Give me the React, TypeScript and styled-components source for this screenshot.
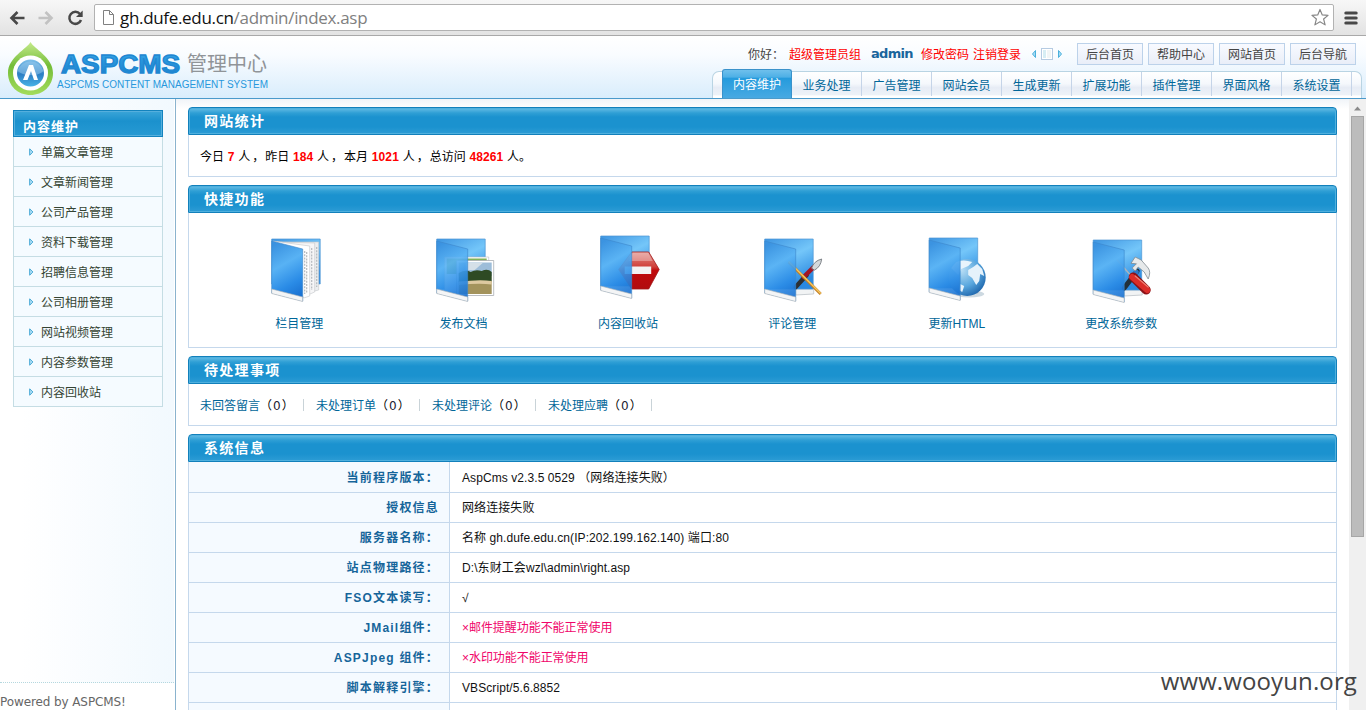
import React from "react";
import styled, { createGlobalStyle } from "styled-components";

const cjk = `"Liberation Sans", "Noto Sans CJK SC", sans-serif`;

const GlobalStyle = createGlobalStyle`
  *, *::before, *::after { box-sizing: border-box; }
  html, body { margin: 0; padding: 0; overflow: hidden; }
  body { font: 12px/18px ${cjk}; color: #000; background: #fff; }
  svg { display: block; }
`;

const Page = styled.div`
  position: relative;
  display: flex;
  flex-direction: column;
  width: 1366px;
  height: 710px;
  overflow: hidden;
`;

/* ---------- browser toolbar ---------- */
const Toolbar = styled.div`
  flex: none;
  height: 36px;
  display: flex;
  align-items: center;
  padding: 0 8px 0 9px;
  background: linear-gradient(#f7f7f7, #e3e3e3);
  border-bottom: 1px solid #a9a9a9;
`;
const NavIcons = styled.div`
  display: flex;
  width: 85px;
  gap: 13px;
`;
const AddressBar = styled.div`
  width: 1240px;
  height: 27px;
  display: flex;
  align-items: center;
  padding: 0 4px 0 7px;
  background: #fff;
  border: 1px solid #b2b2b2;
  border-radius: 2px;
`;
const Url = styled.div`
  flex: 1;
  margin-left: 5px;
  font: 17px/24px "Open Sans", sans-serif;
  letter-spacing: -0.32px;
  color: #808080;
  white-space: nowrap;
`;
const Host = styled.span`
  color: #111;
`;
const MenuButton = styled.div`
  margin-left: 10px;
`;

/* ---------- header ---------- */
const Header = styled.header`
  flex: none;
  height: 63px;
  display: flex;
  justify-content: space-between;
  padding-right: 4px;
  background: linear-gradient(#fff 0%, #f9fcff 30%, #d9edfc 100%);
  border-bottom: 1px solid #4a9acb;
`;
const HeaderRight = styled.div`
  width: 650px;
  display: flex;
  flex-direction: column;
  justify-content: space-between;
`;
const TopLine = styled.div`
  display: flex;
  align-items: center;
  justify-content: flex-end;
  height: 22px;
  margin-top: 7px;
  padding-right: 6px;
  white-space: nowrap;
`;
const Hello = styled.span`
  color: #444;
  width: 41px;
  padding-top: 1px;
`;
const RedLink = styled.a<{ $w: number }>`
  color: #f00;
  width: ${(p) => p.$w}px;
  padding-top: 1px;
`;
const UserName = styled.b`
  width: 50px;
  font: bold 13px/18px "DejaVu Sans", sans-serif;
  letter-spacing: -0.7px;
  color: #1a659c;
`;
const Switcher = styled.div`
  width: 42px;
  padding-left: 1px;
`;
const TopButton = styled.a`
  width: 66px;
  height: 22px;
  margin-left: 5px;
  border: 1px solid #bcd2ea;
  background: linear-gradient(#f8faff, #e9eef8);
  color: #444;
  text-align: center;
  line-height: 22px;
`;
const Tabs = styled.nav`
  display: flex;
  align-items: flex-end;
  height: 29px;
`;
const TabStrip = styled.div`
  display: flex;
  align-items: flex-end;
  flex: 1;
  height: 27px;
  padding: 0 0 0 9px;
  border: 1px solid #b9d4e3;
  border-bottom: 0;
  border-radius: 7px 7px 0 0;
  background: linear-gradient(#fff 0%, #f5f8fc 45%, #e7ecf5 60%, #edf2f8 88%, #fff 92%);
`;
const Tab = styled.a<{ $active?: boolean }>`
  width: 70px;
  height: ${(p) => (p.$active ? 29 : 24)}px;
  line-height: ${(p) => (p.$active ? 30 : 28)}px;
  margin-bottom: ${(p) => (p.$active ? 0 : 2)}px;
  text-align: center;
  color: ${(p) => (p.$active ? "#fff" : "#069")};
  border: solid ${(p) => (p.$active ? "#3a92cb" : "#c5d4e8")};
  border-width: ${(p) => (p.$active ? "1px 1px 0" : "0 1px 0 0")};
  border-radius: ${(p) => (p.$active ? "3px 3px 0 0" : 0)};
  background: ${(p) =>
    p.$active ? "linear-gradient(#6fc0ec 0%, #4eb0e6 25%, #259bdd 30%, #48a9e2 100%)" : "none"};
`;

/* ---------- body ---------- */
const Body = styled.div`
  flex: 1;
  min-height: 0;
  display: flex;
`;
const Sidebar = styled.aside`
  width: 176px;
  display: flex;
  flex-direction: column;
  justify-content: space-between;
  border-right: 1px solid #8ab3ce;
`;
const SideMain = styled.div`
  height: 584px;
  padding: 11px 0 0 13px;
  background: linear-gradient(90deg, #fff 12%, #f2f9fe 100%);
  border-bottom: 1px dotted #b5d8df;
  margin-right: 1px;
`;
const Menu = styled.ul`
  list-style: none;
  width: 150px;
  margin: 0;
  padding: 0;
`;
const MenuTitle = styled.li`
  height: 27px;
  padding-left: 9px;
  border: 1px solid #1383be;
  box-shadow: inset 0 0 0 1px #55afdd;
  background: linear-gradient(#3ba5d8, #1b91cd 40%, #279ad3);
  color: #fff;
  font-weight: bold;
  font-size: 13px;
  line-height: 31px;
  letter-spacing: 1px;
`;
const MenuItem = styled.li`
  display: flex;
  align-items: center;
  gap: 7px;
  height: 30px;
  padding-left: 15px;
  border: solid #c5dde4;
  border-width: 0 1px 1px;
  background: #f5fbff;
  color: #344433;
`;
const MenuLabel = styled.span`
  padding-top: 2px;
`;
const Powered = styled.div`
  height: 27px;
  padding-top: 10px;
  font: 12px/18px "DejaVu Sans", sans-serif;
  letter-spacing: -0.1px;
  color: #666;
  white-space: nowrap;
`;
const Content = styled.main`
  width: 1173px;
  padding: 8px 12px 0;
  display: flex;
  flex-direction: column;
  gap: 8px;
  background: linear-gradient(#f0f4f8, #fff 10px);
  overflow: hidden;
`;
const Panel = styled.section<{ $h: number }>`
  flex: none;
  height: ${(p) => p.$h}px;
  display: flex;
  flex-direction: column;
`;
const PanelTitle = styled.h2`
  flex: none;
  height: 28px;
  margin: 0;
  padding-left: 15px;
  border: 1px solid #1280bb;
  border-radius: 4px 4px 0 0;
  box-shadow: inset 0 0 0 1px #4fb0de;
  background: linear-gradient(#67bde5 0, #2f9fd5 5px, #1b92cf 9px, #1b92cf 19px, #2d9cd5 100%);
  color: #fff;
  font-size: 14px;
  line-height: 27px;
  letter-spacing: 1.3px;
`;
const PanelBody = styled.div`
  flex: 1;
  border: 1px solid #c5d8ec;
  border-top-width: 0;
  background: #fff;
`;
const Stats = styled.div`
  padding: 13px 11px 10px;
  white-space: pre;
  word-spacing: 0.4px;
`;
const Comma = styled.span`
  padding: 0 1px 0 2px;
`;
const Num = styled.b`
  color: #f00;
  letter-spacing: 0.1px;
`;
const Shortcuts = styled.div`
  display: flex;
  padding: 21px 0 0 28px;
`;
const Shortcut = styled.a`
  flex: none;
  width: 164.4px;
  display: flex;
  flex-direction: column;
  align-items: center;
  gap: 11px;
  color: #069;
`;
const Todos = styled.div`
  display: flex;
  padding-top: 15px;
`;
const Todo = styled.div`
  width: 116px;
  height: 12px;
  padding-left: 12px;
  border-right: 1px solid #c9d3d8;
  line-height: 14px;
  white-space: nowrap;
  &:first-child { width: 115px; padding-left: 11px; }
`;
const TodoLink = styled.a`
  color: #069;
`;
const Count = styled.span`
  margin: 0 1px;
  font-family: "DejaVu Sans", sans-serif;
  color: #223;
`;
const InfoTable = styled.div`
  padding-top: 1px;
  background: linear-gradient(90deg, #f5faff 260px, #c5d8ec 260px, #c5d8ec 261px, #fff 261px);
`;
const InfoRow = styled.div`
  display: flex;
  height: 30px;
  border-bottom: 1px solid #c5d8ec;
  line-height: 30px;
`;
const InfoLabel = styled.div`
  width: 261px;
  padding-right: 10px;
  border-right: 1px solid #c5d8ec;
  color: #16659a;
  font-weight: bold;
  letter-spacing: 1.2px;
  text-align: right;
`;
const InfoValue = styled.div<{ $bad?: boolean }>`
  padding-left: 12px;
  color: ${(p) => (p.$bad ? "#f0056a" : "#111")};
  letter-spacing: ${(p) => (p.$bad ? -0.05 : 0.08)}px;
  white-space: pre;
`;

/* ---------- scrollbar ---------- */
const ScrollTrack = styled.div`
  width: 17px;
  padding: 7px 2px 0;
  background: #f0f0f0;
`;
const ScrollThumb = styled.div`
  height: 421px;
  margin-top: 5px;
  width: 13px;
  background: #bcbcbc;
  border: 1px solid #a6a6a6;
`;
const Watermark = styled.div`
  position: absolute;
  right: 9px;
  top: 664px;
  font: 24px/34px "Open Sans", sans-serif;
  letter-spacing: 0.12px;
  color: #444;
`;

const Logo = () => (
  <svg width="280" height="62" viewBox="0 36 280 62">
    <defs>
      <linearGradient id="drop" x1="0" y1="0" x2="0" y2="1">
        <stop offset="0" stopColor="#c5ea8b" />
        <stop offset=".45" stopColor="#74bd38" />
        <stop offset="1" stopColor="#a3dc5c" />
      </linearGradient>
      <linearGradient id="ball" x1="0" y1="0" x2="0" y2="1">
        <stop offset="0" stopColor="#7ec0ea" />
        <stop offset=".55" stopColor="#2d7fc4" />
        <stop offset="1" stopColor="#48b2e6" />
      </linearGradient>
      <linearGradient id="word" x1="0" y1="0" x2="0" y2="1">
        <stop offset="0" stopColor="#36a7e8" />
        <stop offset="1" stopColor="#1a7fcb" />
      </linearGradient>
    </defs>
    <path d="M30.500 42 C34 49 53 57 53 73 C53 86 43 95 30.500 95 C18 95 8 86 8 73 C8 57 27 49 30.500 42Z" fill="url(#drop)" />
    <circle cx="30.500" cy="73" r="17.500" fill="#fff" />
    <circle cx="30.500" cy="73" r="13.500" fill="url(#ball)" />
    <path d="M17.500 71 Q24 76 31 75 Q38 76 43.500 71 A13.500 13.500 0 0 0 17.500 71" fill="#9bcbed" opacity=".5" />
    <path d="M23 80 L29 65 H33 L38 80 H34 L31 71 L27.500 80Z" fill="#fff" />
    <text x="61" y="72.500" textLength="119" lengthAdjust="spacingAndGlyphs" fontFamily="Liberation Sans" fontWeight="bold" fontSize="25" fill="url(#word)" stroke="#2087d2" strokeWidth="1.300">ASPCMS</text>
    <text x="187" y="71" textLength="80" fontFamily="Noto Sans CJK SC" fontWeight="400" fontSize="20" fill="#909498">管理中心</text>
    <text x="57" y="88" textLength="211" lengthAdjust="spacingAndGlyphs" fontFamily="Liberation Sans" fontSize="10" fill="#2898dc">ASPCMS CONTENT MANAGEMENT SYSTEM</text>
  </svg>
);

const BackIcon = ({ color }: { color: string }) => (
  <svg width="16" height="16" viewBox="0 0 16 16" fill="none" stroke={color} strokeWidth="2.600">
    <path d="M15.500 8H3M8.500 2L2.500 8L8.500 14" />
  </svg>
);
const ForwardIcon = () => (
  <svg width="16" height="16" viewBox="0 0 16 16" fill="none" stroke="#c2c2c2" strokeWidth="2.600">
    <path d="M.5 8H13M7.500 2L13.500 8L7.500 14" />
  </svg>
);
const ReloadIcon = () => (
  <svg width="17" height="16" viewBox="0 0 17 16">
    <path d="M13 4A6 6 0 1 0 14 10" fill="none" stroke="#484848" strokeWidth="2.500" />
    <path d="M9 7H15.700V.5Z" fill="#484848" />
  </svg>
);
const PageIcon = () => (
  <svg width="13" height="17" viewBox="0 0 13 17" fill="#fff" stroke="#808080">
    <path d="M1.500 1.500H7.500L11.500 5.500V15.500H1.500ZM7.500 1.500V5.500H11.500" />
  </svg>
);
const StarIcon = () => (
  <svg width="18" height="19" viewBox="0 0 19 19" fill="#fff" stroke="#858585" strokeWidth="1.200" strokeLinejoin="round">
    <path d="M9.500 1L11.900 6.800L18 7.200L13.300 11.100L14.900 17.300L9.500 14L4.100 17.300L5.700 11.100L1 7.200L7.100 6.800Z" />
  </svg>
);
const BarsIcon = () => (
  <svg width="14" height="14" viewBox="0 0 14 14" stroke="#484848" strokeWidth="3" strokeLinecap="round">
    <path d="M1.800 2H12.200M1.800 7H12.200M1.800 12H12.200" />
  </svg>
);
const SwitchIcon = () => (
  <svg width="32" height="14" viewBox="0 0 32 14">
    <path d="M4.500 3.500V10.500L1.500 7Z" fill="#a9dcf5" stroke="#4ab0dc" />
    <rect x="10.500" y="1.500" width="11" height="11" fill="#fff" stroke="#b5cbe2" />
    <path d="M12 3H15V11H12Z" fill="#d7eef4" />
    <path d="M16 3H20V11H16Z" fill="#f1f5f5" />
    <path d="M27.500 3.500V10.500L30.500 7Z" fill="#a9dcf5" stroke="#4ab0dc" />
  </svg>
);
const Arrow = () => (
  <svg width="5" height="8" viewBox="0 0 5 8">
    <path d="M.7 .8V7.200L3.900 4Z" fill="#b5e2f6" stroke="#43a6d3" />
  </svg>
);

const Photo = () => (
  <g>
    <path d="M12 23H56V58H12Z" fill="#fff" stroke="#b8bcc0" strokeWidth=".6" />
    <path d="M14 24.500H54V40H14Z" fill="#84b259" />
    <path d="M24 26.500H61V61.500H24Z" fill="#fff" stroke="#a9adb2" strokeWidth=".8" />
    <path d="M26 28.500H59V42H26Z" fill="#9dbdd9" />
    <path d="M33 29H50L42 36H33Z" fill="#d5e0e8" />
    <path d="M26 39Q33 35 38 38Q43 35 49 37Q55 34 59 38V48H26Z" fill="#2e4a23" />
    <path d="M26 47H59V60H26Z" fill="#a3935c" />
    <path d="M26 48Q46 45 59 47V50.500Q46 49 26 51Z" fill="#ddc9a0" />
  </g>
);
const StopSign = () => (
  <g>
    <path d="M22 38.500L35 21H52L62.500 38.500L52 58H35Z" fill="url(#stop)" stroke="#a11718" strokeWidth=".8" />
    <path d="M28 35.500H54.500V43H28Z" fill="#f3f3f3" />
    <path d="M36 21.500H51.500L56 30H32Z" fill="#fff" opacity=".3" />
  </g>
);
const Tools = ({ hammer }: { hammer?: boolean }) =>
  hammer ? (
    <g strokeLinecap="round">
      <path d="M35 53L48 36" stroke="#22303b" strokeWidth="5" />
      <path d="M43 43L47 37" stroke="#2c79ca" strokeWidth="5" />
      <path d="M42 28L46 22L52 25L59 33Q62 37 59 44L55 37L49 32L46 36L43 33L47 29Z" fill="#e6e9ea" stroke="#818b92" strokeWidth=".8" />
      <path d="M28 25L42 41" stroke="#aab4bc" strokeWidth="1.400" />
      <path d="M44 42L57 55" stroke="#8b1217" strokeWidth="9" />
      <path d="M43 42L58 55" stroke="#db2d29" strokeWidth="6" />
      <path d="M46 41L59 52" stroke="#f07f72" strokeWidth="1.300" />
    </g>
  ) : (
    <g strokeLinecap="round">
      <path d="M35 53L46 41" stroke="#2d3033" strokeWidth="4.500" />
      <path d="M43 43L53 33" stroke="#a11527" strokeWidth="4.500" />
      <path d="M51 34Q53 27 61 25Q60 33 54 36Z" fill="#d5d8da" stroke="#757b80" strokeWidth=".9" />
      <path d="M28 28L60 60" stroke="#c07c22" strokeWidth="2.800" strokeLinecap="butt" />
      <path d="M28 27.500L60 59.500" stroke="#f7c75d" strokeWidth="1.400" strokeLinecap="butt" />
    </g>
  );
const Globe = () => (
  <g>
    <ellipse cx="44" cy="61" rx="15" ry="3.500" fill="#9bb3c4" opacity=".5" />
    <circle cx="42" cy="44.500" r="18.500" fill="url(#sea)" />
    <path d="M31 29Q38 26 47 29L43 33L36 36L33 42L26 35Z" fill="#e8f4fc" />
    <path d="M43 37L48 34L52 31L57 36L59 43L55 41L54 48L51 52L47 45L43 42Z" fill="#e5f2fb" />
    <path d="M35 51L39 53L37 59L34 57Z" fill="#e5f2fb" />
  </g>
);
const Sheets = () => (
  <g stroke="#c3c6ca" strokeWidth=".6">
    <path d="M7 8L51 8V56L43 58V10Z" fill="#eceef0" />
    <path d="M6 8L47 9V58L40 61Z" fill="#f6f6f7" />
    <path d="M5 7L42 12V62L36 64Z" fill="#fff" />
    <path d="M37 17V60M39 18V59M44 14V56M49 13V53" stroke="#b4b8bd" strokeDasharray="2 1.200" strokeWidth="1.200" />
  </g>
);

type Kind = "sheets" | "photo" | "stop" | "pen" | "globe" | "tools";
const lift: Record<Kind, number> = { sheets: 0, photo: 0, stop: -3, pen: 0, globe: -1, tools: 1 };

const FolderIcon = ({ kind }: { kind: Kind }) => (
  <svg width="64" height="70" viewBox="0 0 64 70">
    <g transform={`translate(${kind === "globe" || kind === "tools" ? 0.2 : 0.7} ${lift[kind]})`}>
      {kind !== "sheets" && kind !== "stop" && kind !== "photo" && (
        <path d="M35 55H53V60L35 61Z" fill="#f1f3f4" stroke="#b5bcc2" strokeWidth=".7" />
      )}
      <path d={kind === "sheets" ? "M4 5H52.500V50H4Z" : "M4 5H52.500V55H4Z"} fill="url(#folderBack)" stroke="#4d96d4" strokeWidth=".7" />
      {kind === "sheets" && <Sheets />}
      {kind === "photo" && <Photo />}
      {kind === "stop" && <StopSign />}
      {kind === "pen" && <Tools />}
      {kind === "globe" && <Globe />}
      {kind === "tools" && <Tools hammer />}
      <path d="M4 7L35 15V67L4 59Z" fill="url(#folderFront)" fillOpacity={kind === "sheets" ? 1 : 0.9} stroke="#3c87cb" strokeWidth=".6" />
      <path d="M4 55L35 63V67.500L4 59.500Z" fill="#f4f5f6" stroke="#aab0b5" strokeWidth=".6" />
    </g>
  </svg>
);
const IconDefs = () => (
  <svg width="0" height="0">
    <defs>
      <linearGradient id="folderBack" x1="0" y1="0" x2=".5" y2="1">
        <stop offset="0" stopColor="#3d95e2" />
        <stop offset=".5" stopColor="#74c6f9" />
        <stop offset="1" stopColor="#2a89e0" />
      </linearGradient>
      <linearGradient id="folderFront" x1=".3" y1="0" x2=".6" y2="1">
        <stop offset="0" stopColor="#3a92e0" />
        <stop offset=".38" stopColor="#58b2f4" />
        <stop offset=".75" stopColor="#2a8be6" />
        <stop offset="1" stopColor="#1a72d2" />
      </linearGradient>
      <linearGradient id="stop" x1="0" y1="0" x2="0" y2="1">
        <stop offset="0" stopColor="#e08c86" />
        <stop offset=".4" stopColor="#d0403a" />
        <stop offset=".5" stopColor="#c00a0c" />
        <stop offset="1" stopColor="#b10c0e" />
      </linearGradient>
      <radialGradient id="sea" cx=".35" cy=".3" r=".75">
        <stop offset="0" stopColor="#b9def5" />
        <stop offset=".6" stopColor="#59a7de" />
        <stop offset="1" stopColor="#2068ae" />
      </radialGradient>
    </defs>
  </svg>
);

const tabs = ["内容维护", "业务处理", "广告管理", "网站会员", "生成更新", "扩展功能", "插件管理", "界面风格", "系统设置"];
const topButtons = ["后台首页", "帮助中心", "网站首页", "后台导航"];
const menu = ["单篇文章管理", "文章新闻管理", "公司产品管理", "资料下载管理", "招聘信息管理", "公司相册管理", "网站视频管理", "内容参数管理", "内容回收站"];
const shortcuts: [string, Kind][] = [
  ["栏目管理", "sheets"],
  ["发布文档", "photo"],
  ["内容回收站", "stop"],
  ["评论管理", "pen"],
  ["更新HTML", "globe"],
  ["更改系统参数", "tools"],
];
const todos = ["未回答留言", "未处理订单", "未处理评论", "未处理应聘"];
const info: { label: string; value: string; bad?: boolean }[] = [
  { label: "当前程序版本：", value: "AspCms v2.3.5 0529 （网络连接失败）" },
  { label: "授权信息", value: "网络连接失败" },
  { label: "服务器名称：", value: "名称 gh.dufe.edu.cn(IP:202.199.162.140) 端口:80" },
  { label: "站点物理路径：", value: "D:\\东财工会wzl\\admin\\right.asp" },
  { label: "FSO文本读写：", value: "√" },
  { label: "JMail组件：", value: "×邮件提醒功能不能正常使用", bad: true },
  { label: "ASPJpeg 组件：", value: "×水印功能不能正常使用", bad: true },
  { label: "脚本解释引擎：", value: "VBScript/5.6.8852" },
  { label: "", value: "" },
];

export default function App() {
  return (
    <Page>
      <GlobalStyle />
      <Toolbar>
        <NavIcons>
          <BackIcon color="#484848" />
          <ForwardIcon />
          <ReloadIcon />
        </NavIcons>
        <AddressBar>
          <PageIcon />
          <Url>
            <Host>gh.dufe.edu.cn</Host>/admin/index.asp
          </Url>
          <StarIcon />
        </AddressBar>
        <MenuButton>
          <BarsIcon />
        </MenuButton>
      </Toolbar>

      <Header>
        <Logo />
        <HeaderRight>
          <TopLine>
            <Hello>你好：</Hello>
            <RedLink $w={82}>超级管理员组</RedLink>
            <UserName>admin</UserName>
            <RedLink $w={52}>修改密码</RedLink>
            <RedLink $w={57}>注销登录</RedLink>
            <Switcher>
              <SwitchIcon />
            </Switcher>
            {topButtons.map((b, i) => (
              <TopButton key={i}>{b}</TopButton>
            ))}
          </TopLine>
          <Tabs>
            <TabStrip>
              {tabs.map((t, i) => (
                <Tab key={t} $active={i === 0}>
                  {t}
                </Tab>
              ))}
            </TabStrip>
          </Tabs>
        </HeaderRight>
      </Header>

      <Body>
        <Sidebar>
          <SideMain>
            <Menu>
              <MenuTitle>内容维护</MenuTitle>
              {menu.map((m) => (
                <MenuItem key={m}>
                  <Arrow />
                  <MenuLabel>{m}</MenuLabel>
                </MenuItem>
              ))}
            </Menu>
          </SideMain>
          <Powered>Powered by ASPCMS!</Powered>
        </Sidebar>

        <Content>
          <Panel $h={70}>
            <PanelTitle>网站统计</PanelTitle>
            <PanelBody>
              <Stats>
                今日 <Num>7</Num> 人<Comma>，</Comma>昨日 <Num>184</Num> 人<Comma>，</Comma>本月 <Num>1021</Num> 人
                <Comma>，</Comma>总访问 <Num>48261</Num> 人。
              </Stats>
            </PanelBody>
          </Panel>

          <Panel $h={163}>
            <PanelTitle>快捷功能</PanelTitle>
            <PanelBody>
              <Shortcuts>
                {shortcuts.map(([label, kind]) => (
                  <Shortcut key={label}>
                    <FolderIcon kind={kind} />
                    {label}
                  </Shortcut>
                ))}
              </Shortcuts>
              <IconDefs />
            </PanelBody>
          </Panel>

          <Panel $h={70}>
            <PanelTitle>待处理事项</PanelTitle>
            <PanelBody>
              <Todos>
                {todos.map((t) => (
                  <Todo key={t}>
                    <TodoLink>{t}</TodoLink>（<Count>0</Count>）
                  </Todo>
                ))}
              </Todos>
            </PanelBody>
          </Panel>

          <Panel $h={320}>
            <PanelTitle>系统信息</PanelTitle>
            <PanelBody>
              <InfoTable>
                {info.map((r, i) => (
                  <InfoRow key={i}>
                    <InfoLabel>{r.label}</InfoLabel>
                    <InfoValue $bad={r.bad}>{r.value}</InfoValue>
                  </InfoRow>
                ))}
              </InfoTable>
            </PanelBody>
          </Panel>
        </Content>

        <ScrollTrack>
          <svg width="13" height="5" viewBox="0 0 13 5">
            <path d="M3 4.500L6.500 .5L10 4.500Z" fill="#8a8a8a" />
          </svg>
          <ScrollThumb />
        </ScrollTrack>
      </Body>
      <Watermark>www.wooyun.org</Watermark>
    </Page>
  );
}
